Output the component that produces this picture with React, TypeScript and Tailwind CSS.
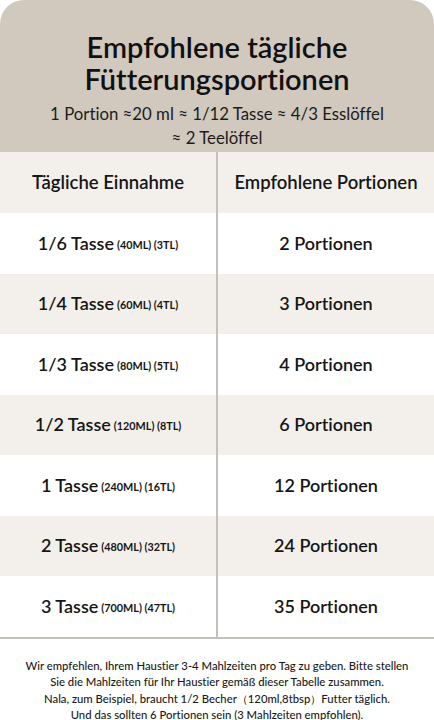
import React from 'react';

const rows = [
  { cup: '1/6 Tasse', note: '(40ML) (3TL)', portions: '2 Portionen' },
  { cup: '1/4 Tasse', note: '(60ML) (4TL)', portions: '3 Portionen' },
  { cup: '1/3 Tasse', note: '(80ML) (5TL)', portions: '4 Portionen' },
  { cup: '1/2 Tasse', note: '(120ML) (8TL)', portions: '6 Portionen' },
  { cup: '1 Tasse', note: '(240ML) (16TL)', portions: '12 Portionen' },
  { cup: '2 Tasse', note: '(480ML) (32TL)', portions: '24 Portionen' },
  { cup: '3 Tasse', note: '(700ML) (47TL)', portions: '35 Portionen' },
];

export default function App() {
  return (
    <div className="w-[434px] h-[720px] bg-white text-[#161616] font-['Lato','Noto_Sans',sans-serif] [font-variant-ligatures:none] overflow-hidden">
      {/* title block */}
      <div className="h-[152px] bg-[#d1c9be] rounded-t-[24px] flex flex-col items-center pt-[31px]">
        <h1 className="text-[29px] leading-[32px] font-semibold text-center text-[#111]">
          Empfohlene tägliche
          <br />
          Fütterungsportionen
        </h1>
        <p className="mt-[7px] text-[16.8px] leading-[24px] text-center text-[#1c1c1c]">
          1 Portion ≈20 ml ≈ 1/12 Tasse ≈ 4/3 Esslöffel
          <br />≈ 2 Teelöffel
        </p>
      </div>

      {/* table */}
      <div className="border-b-2 border-[#c4c1bd]">
        <div className="grid grid-cols-[216px_2px_1fr] h-[61px] bg-[#f3f0ec]">
          <div className="flex items-center justify-center text-[18.5px] font-semibold">Tägliche Einnahme</div>
          <div className="bg-[#c4c1bd]" />
          <div className="flex items-center justify-center text-[18.5px] font-semibold">Empfohlene Portionen</div>
        </div>
        {rows.map((r, i) => (
          <div
            key={r.cup}
            className={`grid grid-cols-[216px_2px_1fr] h-[60.5px] ${i % 2 === 1 ? 'bg-[#f3f0ec]' : 'bg-white'}`}
          >
            <div className="flex items-center justify-center">
              <span className="text-[18px] font-semibold">{r.cup}</span>
              <span className="ml-[3px] mt-[3px] text-[10.8px] font-bold">{r.note}</span>
            </div>
            <div className="bg-[#c4c1bd]" />
            <div className="flex items-center justify-center text-[18px] font-semibold">{r.portions}</div>
          </div>
        ))}
      </div>

      {/* footnote */}
      <div className="pt-[19px] px-2 text-center text-[11.3px] leading-[16.5px] font-medium text-[#1a1a1a]">
        Wir empfehlen, Ihrem Haustier 3-4 Mahlzeiten pro Tag zu geben. Bitte stellen
        <br />
        Sie die Mahlzeiten für Ihr Haustier gemäß dieser Tabelle zusammen.
        <br />
        Nala, zum Beispiel, braucht 1/2 Becher（120ml,8tbsp）Futter täglich.
        <br />
        Und das sollten 6 Portionen sein (3 Mahlzeiten empfohlen).
      </div>
    </div>
  );
}
